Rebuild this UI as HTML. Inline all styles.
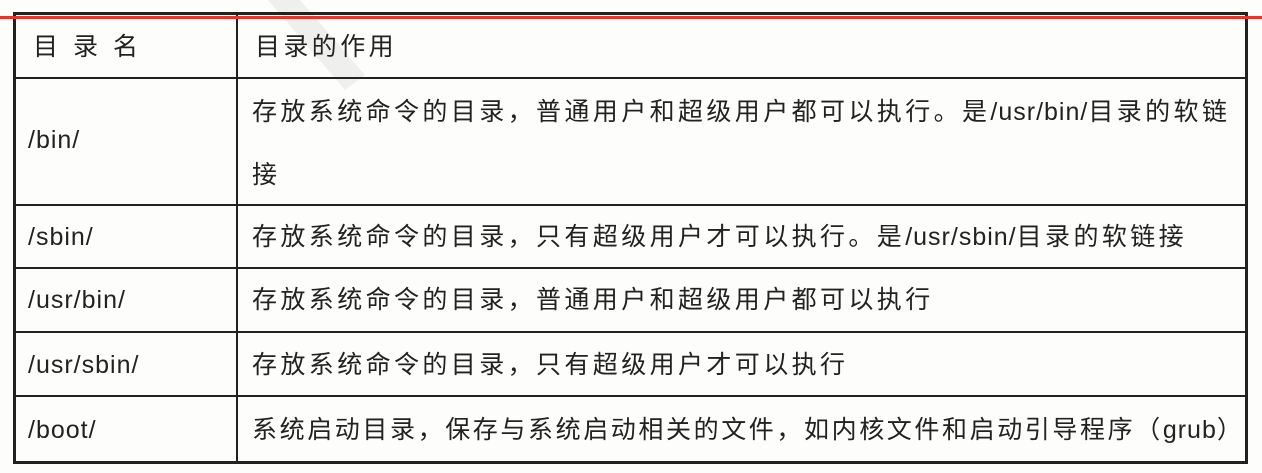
<!DOCTYPE html>
<html><head><meta charset="utf-8"><style>
body{margin:0;width:1262px;height:473px;background:#fdfdfb;position:relative;overflow:hidden;font-family:"Liberation Sans","Noto Sans CJK SC",sans-serif;color:#222;font-size:25px}
.h{position:absolute;height:2px;background:#222}
.v{position:absolute;width:2px;background:#222}
.t{position:absolute;white-space:nowrap;line-height:30px;letter-spacing:3.4px}
.l{font-size:25px;letter-spacing:1px}
</style></head><body>
<svg style="position:absolute;left:0;top:0" width="1262" height="473"><polygon points="268,0 300,0 365,75 345,90" fill="#e6e6e6" opacity="0.6"/></svg>
<div class="h" style="left:13px;top:12px;width:1235px;height:3px"></div>
<div class="h" style="left:13px;top:77px;width:1235px"></div>
<div class="h" style="left:13px;top:204px;width:1235px"></div>
<div class="h" style="left:13px;top:267px;width:1235px"></div>
<div class="h" style="left:13px;top:331px;width:1235px"></div>
<div class="h" style="left:13px;top:395px;width:1235px"></div>
<div class="h" style="left:13px;top:461px;width:1235px;height:3px"></div>
<div class="v" style="left:13px;top:12px;height:452px;width:3px"></div>
<div class="v" style="left:236px;top:12px;height:452px"></div>
<div class="v" style="left:1245px;top:12px;height:452px;width:3px"></div>
<div style="position:absolute;left:0;top:16px;width:1262px;height:3px;background:#e8332a"></div>

<div class="t" style="left:33px;top:32px;letter-spacing:15px">目录名</div>
<div class="t" style="left:255px;top:32px">目录的作用</div>
<div class="t l" style="left:28px;top:125px">/bin/</div>
<div class="t" style="left:252px;top:97px">存放系统命令的目录，普通用户和超级用户都可以执行。是<span class="l">/usr/bin/</span>目录的软链</div>
<div class="t" style="left:252px;top:160px">接</div>
<div class="t l" style="left:28px;top:222px">/sbin/</div>
<div class="t" style="left:252px;top:222px">存放系统命令的目录，只有超级用户才可以执行。是<span class="l">/usr/sbin/</span>目录的软链接</div>
<div class="t l" style="left:28px;top:285px">/usr/bin/</div>
<div class="t" style="left:252px;top:285px">存放系统命令的目录，普通用户和超级用户都可以执行</div>
<div class="t l" style="left:28px;top:350px">/usr/sbin/</div>
<div class="t" style="left:252px;top:350px">存放系统命令的目录，只有超级用户才可以执行</div>
<div class="t l" style="left:28px;top:415px">/boot/</div>
<div class="t" style="left:252px;top:415px;letter-spacing:2.6px">系统启动目录，保存与系统启动相关的文件，如内核文件和启动引导程序（<span class="l">grub</span>）</div>
</body></html>
